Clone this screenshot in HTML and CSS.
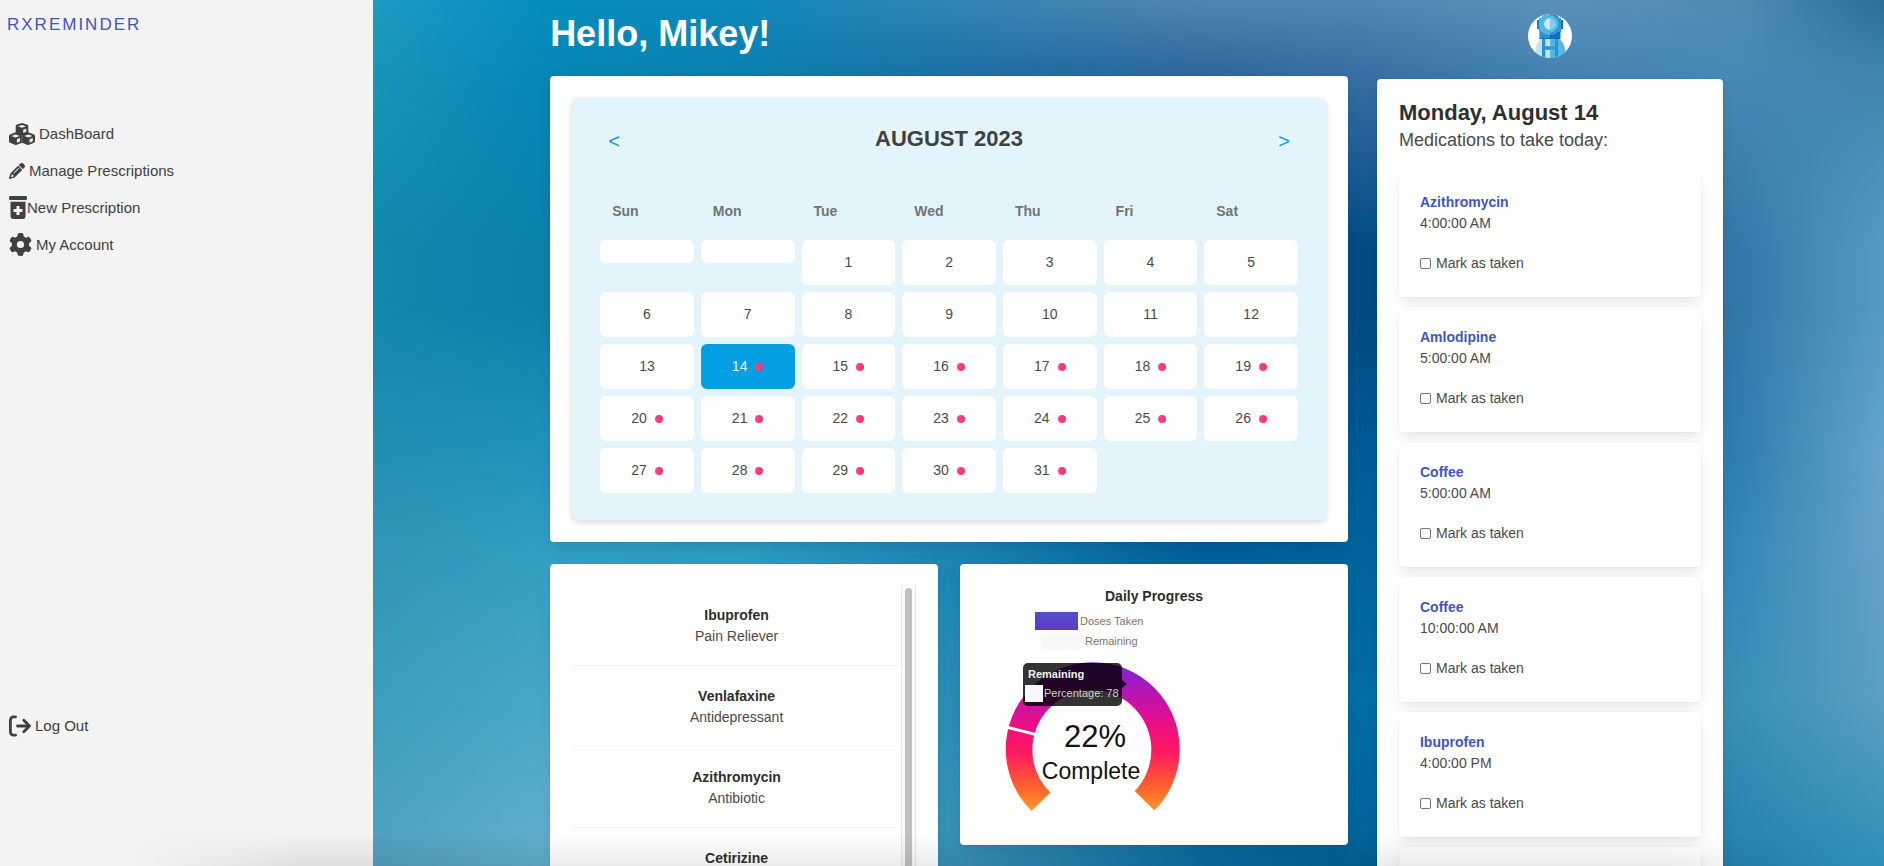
FILE: index.html
```html
<!DOCTYPE html>
<html lang="en">
<head>
<meta charset="utf-8">
<title>RxReminder</title>
<link rel="stylesheet" href="styles.css">
</head>
<body>
<aside class="sidebar">
  <a class="brand" href="#">RXREMINDER</a>
  <nav class="menu">
    <a class="menu-item" href="#">
      <svg width="26" height="22" viewBox="0 0 26 22" aria-hidden="true">
        <path fill="#404040" d="M13 0l5 1.600q1.300.500 1.300 1.900v5.700l5.300 2q1.400.600 1.400 2v4.700q0 1.300-1.200 1.900l-4.600 2q-1 .400-2 0L13 19.800l-5.200 2q-1 .400-2 0l-4.600-2Q0 19.200 0 17.900v-4.700q0-1.400 1.400-2l5.300-2V3.500q0-1.400 1.300-1.900z"/>
        <g fill="#f3f3f3"><path d="M9 3.300L13 2l4 1.300-4 1.500zM14.200 6.800l3-1.200v3.100l-3 1.200zM2.400 12.900l4.200-1.500 4.100 1.500-4.100 1.600zM7.900 16.300l3.100-1.200v3.400l-3.100 1.300zM15.300 12.900l4.100-1.500 4.200 1.500-4.200 1.600zM20.600 16.300l3.200-1.200v3.200l-3.200 1.500z"/><path d="M12.700 12.500h.600v6.500h-.600z" opacity=".5"/></g>
      </svg>
      <span class="menu-text">DashBoard</span>
    </a>
    <a class="menu-item" href="#">
      <svg width="16" height="16" viewBox="0 0 512 512" aria-hidden="true"><path fill="#404040" d="M410.3 231l11.300-11.300-33.900-33.900-62.100-62.100L291.700 89.800l-11.300 11.300-22.600 22.600L58.600 322.900c-10.400 10.400-18 23.300-22.200 37.400L1 480.700c-2.500 8.400-.2 17.500 6.100 23.700s15.300 8.500 23.700 6.100l120.300-35.400c14.100-4.200 27-11.800 37.400-22.200L387.700 253.700 410.300 231zM160 399.400l-9.100 22.700c-4 3.100-8.500 5.400-13.300 6.900L59.400 452l23-78.100c1.400-4.900 3.800-9.400 6.900-13.300l22.700-9.100v32c0 8.800 7.200 16 16 16h32zM362.700 18.700L348.300 33.200 325.700 55.800 314.300 67.100l33.900 33.900 62.100 62.100 33.900 33.900 11.300-11.300 22.600-22.600 14.500-14.500c25-25 25-65.500 0-90.500L453.300 18.700c-25-25-65.500-25-90.500 0zm-47.400 168l-144 144c-6.200 6.200-16.400 6.200-22.600 0s-6.200-16.400 0-22.600l144-144c6.200-6.200 16.400-6.200 22.600 0s6.200 16.400 0 22.600z"/></svg>
      <span class="menu-text">Manage Prescriptions</span>
    </a>
    <a class="menu-item" href="#">
      <svg width="18" height="23" viewBox="0 0 18 23" aria-hidden="true"><rect width="18" height="4" rx="1.200" fill="#404040"/><path fill="#404040" d="M1.500 5.700h15V20a3 3 0 0 1-3 3h-9a3 3 0 0 1-3-3z"/><path fill="#f3f3f3" d="M7.500 10h3v3h3v3h-3v3h-3v-3h-3v-3h3z"/></svg>
      <span class="menu-text flush">New Prescription</span>
    </a>
    <a class="menu-item" href="#">
      <svg width="23" height="23" viewBox="0 0 512 512" aria-hidden="true"><path fill="#404040" d="M495.900 166.600c3.200 8.700 .5 18.400-6.400 24.600l-43.300 39.400c1.100 8.300 1.700 16.800 1.700 25.400s-.6 17.100-1.700 25.400l43.300 39.400c6.900 6.200 9.600 15.900 6.400 24.600c-4.400 11.900-9.700 23.300-15.800 34.300l-4.700 8.100c-6.600 11-14 21.400-22.100 31.200c-5.900 7.200-15.700 9.600-24.500 6.800l-55.700-17.700c-13.400 10.300-28.200 18.900-44 25.400l-12.500 57.100c-2 9.100-9 16.300-18.200 17.800c-13.800 2.300-28 3.500-42.500 3.500s-28.700-1.200-42.500-3.500c-9.200-1.500-16.200-8.700-18.200-17.800l-12.500-57.100c-15.800-6.500-30.600-15.100-44-25.400L83.100 425.900c-8.800 2.800-18.600 .3-24.500-6.800c-8.100-9.800-15.500-20.200-22.100-31.200l-4.700-8.100c-6.100-11-11.400-22.400-15.800-34.300c-3.200-8.700-.5-18.400 6.400-24.600l43.300-39.400C64.600 273.100 64 264.600 64 256s.6-17.100 1.700-25.400L22.400 191.200c-6.900-6.200-9.600-15.900-6.400-24.600c4.400-11.900 9.700-23.300 15.800-34.300l4.700-8.100c6.600-11 14-21.400 22.100-31.200c5.900-7.200 15.700-9.600 24.500-6.800l55.700 17.700c13.400-10.300 28.200-18.900 44-25.400l12.500-57.100c2-9.100 9-16.300 18.200-17.800C227.300 1.200 241.500 0 256 0s28.700 1.200 42.500 3.500c9.200 1.500 16.200 8.700 18.200 17.800l12.500 57.100c15.800 6.500 30.600 15.100 44 25.400l55.700-17.700c8.800-2.800 18.600-.3 24.500 6.800c8.100 9.800 15.500 20.200 22.100 31.200l4.700 8.100c6.100 11 11.400 22.400 15.800 34.300zM256 336a80 80 0 1 0 0-160 80 80 0 1 0 0 160z"/></svg>
      <span class="menu-text">My Account</span>
    </a>
  </nav>
  <a class="menu-item logout" href="#">
    <svg width="22" height="22" viewBox="0 0 22 22" aria-hidden="true"><g fill="none" stroke="#404040" stroke-width="2.800" stroke-linecap="round" stroke-linejoin="round"><path d="M6.600 1.900H4.400a3 3 0 0 0-3 3v12.200a3 3 0 0 0 3 3h2.200"/><path d="M8.500 11h12M14.800 5.300l5.700 5.700-5.700 5.700"/></g></svg>
    <span class="menu-text">Log Out</span>
  </a>
</aside>

<main class="main">
  <div class="backdrop" aria-hidden="true">
    <div class="band band-1"></div><div class="band band-2"></div><div class="band band-3"></div><div class="band band-4"></div><div class="band band-5"></div><div class="band band-6"></div><div class="band band-7"></div>
  </div>

  <div class="primary">
    <h1 class="greeting">Hello, Mikey!</h1>
    <section class="panel">
      <div class="calendar">
        <div class="calendar-head">
          <button class="arrow" aria-label="Previous month">&lt;</button>
          <h2 class="heading">AUGUST 2023</h2>
          <button class="arrow" aria-label="Next month">&gt;</button>
        </div>
        <div class="grid weekdays">
          <span>Sun</span><span>Mon</span><span>Tue</span><span>Wed</span><span>Thu</span><span>Fri</span><span>Sat</span>
        </div>
        <div class="grid">
          <div class="blank"></div><div class="blank"></div>
          <button class="day">1</button><button class="day">2</button><button class="day">3</button><button class="day">4</button><button class="day">5</button>
          <button class="day">6</button><button class="day">7</button><button class="day">8</button><button class="day">9</button><button class="day">10</button><button class="day">11</button><button class="day">12</button>
          <button class="day">13</button><button class="day dose today">14</button><button class="day dose">15</button><button class="day dose">16</button><button class="day dose">17</button><button class="day dose">18</button><button class="day dose">19</button>
          <button class="day dose">20</button><button class="day dose">21</button><button class="day dose">22</button><button class="day dose">23</button><button class="day dose">24</button><button class="day dose">25</button><button class="day dose">26</button>
          <button class="day dose">27</button><button class="day dose">28</button><button class="day dose">29</button><button class="day dose">30</button><button class="day dose">31</button>
        </div>
      </div>
    </section>

    <div class="pair">
      <section class="panel list-panel">
        <ul class="drug-list">
          <li><strong>Ibuprofen</strong><span>Pain Reliever</span></li>
          <li><strong>Venlafaxine</strong><span>Antidepressant</span></li>
          <li><strong>Azithromycin</strong><span>Antibiotic</span></li>
          <li><strong>Cetirizine</strong></li>
        </ul>
        <div class="track"><div class="thumb"></div></div>
      </section>

      <section class="panel">
        <h3 class="chart-title">Daily Progress</h3>
        <svg class="chart" width="218" height="217" viewBox="0 0 218 217" role="img" aria-label="Daily progress, 22% complete">
          <defs>
            <linearGradient id="heat" gradientUnits="userSpaceOnUse" x1="0" y1="0" x2="0" y2="210">
              <stop offset="0" stop-color="#4c58c8"/>
              <stop offset=".12" stop-color="#6138c9"/>
              <stop offset=".3" stop-color="#8a1ed4"/>
              <stop offset=".48" stop-color="#d011a0"/>
              <stop offset=".58" stop-color="#ee0f80"/>
              <stop offset=".7" stop-color="#ff1a60"/>
              <stop offset=".88" stop-color="#ff6a28"/>
              <stop offset="1" stop-color="#ffa538"/>
            </linearGradient>
          </defs>
          <rect x="53" y="6" width="43" height="18" fill="url(#heat)"/>
          <text class="legend" x="98" y="19">Doses Taken</text>
          <rect x="59" y="27" width="42" height="17" fill="#f8f8f8"/>
          <text class="legend" x="103" y="39">Remaining</text>
          <path fill="url(#heat)" d="M49.500 205A87 87 0 1 1 172.500 204.500L152.700 185A59.500 59.500 0 1 0 68.500 186.500Z"/>
          <path stroke="#fff" stroke-width="3" d="M25 121.200L55 128.900"/>
          <path fill="#000" fill-opacity=".8" d="M46 57h89a5 5 0 0 1 5 5v12l5 4-5 4v13a5 5 0 0 1-5 5H46a5 5 0 0 1-5-5V62a5 5 0 0 1 5-5z"/>
          <text class="tip strong" x="46" y="72">Remaining</text>
          <rect x="43" y="79" width="18" height="17" fill="#f8f8f8"/>
          <text class="tip" x="62" y="91">Percentage: 78</text>
          <text class="percent" x="113" y="141">22%</text>
          <text class="caption" x="109" y="173">Complete</text>
        </svg>
      </section>
    </div>
  </div>

  <div class="secondary">
    <svg class="avatar" width="44" height="44" viewBox="0 0 44 44" role="img" aria-label="Profile">
      <defs><clipPath id="round"><circle cx="22" cy="22" r="22"/></clipPath></defs>
      <g clip-path="url(#round)">
        <path fill="#fff" d="M0 0h44v44H0z"/>
        <path fill="#c0e3f2" d="M14 24c-5 3-7 8-7 20h10V24z"/>
        <path fill="#58b7dc" d="M30 24c5 3 8 9 8 20H28V24z"/>
        <path fill="#2b93d5" d="M14 24h16v20H14z"/>
        <path fill="#58b7dc" d="M17 25h10v19H17z"/>
        <path fill="#c0e3f2" d="M17.500 25h4.500v7h-4.500zM17.500 36h4.500v8h-4.500z"/>
        <path fill="#2b93d5" d="M14 32.500h16v3H14z"/>
        <path fill="#1a7fca" d="M9 6h4v9H9z"/>
        <path fill="#0b6fc2" d="M31 6h4v9h-4z"/>
        <path fill="#0b6fc2" d="M11.500 17h21v8h-21z"/>
        <path fill="#2b93d5" d="M12 17h10v7H12z"/>
        <path fill="#45a9da" d="M11 4h8v14h-8z"/>
        <path fill="#2b93d5" d="M25 4h8v14h-8z"/>
        <circle cx="22" cy="10" r="11" fill="#58b7dc"/>
        <path fill="#2b93d5" d="M22-1a11 11 0 0 1 0 22z"/>
        <circle cx="22" cy="10" r="8.500" fill="#58b7dc"/>
        <circle cx="22" cy="10" r="5.800" fill="#8accea"/>
        <path fill="#c8e7f4" d="M22 4.200a5.800 5.800 0 0 0 0 11.600z"/>
      </g>
    </svg>
    <section class="panel">
      <h2 class="heading dark">Monday, August 14</h2>
      <p class="subtitle">Medications to take today:</p>
      <div class="doses">
        <article class="dose-card"><a class="drug" href="#">Azithromycin</a><time>4:00:00 AM</time><label><input type="checkbox">Mark as taken</label></article>
        <article class="dose-card"><a class="drug" href="#">Amlodipine</a><time>5:00:00 AM</time><label><input type="checkbox">Mark as taken</label></article>
        <article class="dose-card"><a class="drug" href="#">Coffee</a><time>5:00:00 AM</time><label><input type="checkbox">Mark as taken</label></article>
        <article class="dose-card"><a class="drug" href="#">Coffee</a><time>10:00:00 AM</time><label><input type="checkbox">Mark as taken</label></article>
        <article class="dose-card"><a class="drug" href="#">Ibuprofen</a><time>4:00:00 PM</time><label><input type="checkbox">Mark as taken</label></article>
        <article class="dose-card"></article>
      </div>
    </section>
  </div>
</main>
<div class="bottom-shade" aria-hidden="true"></div>
</body>
</html>
```
FILE: styles.css
```css
* { box-sizing: border-box; }

body {
  margin: 0;
  display: flex;
  height: 100vh;
  overflow: hidden;
  font-family: "Liberation Sans", Arial, sans-serif;
  font-size: 14px;
  line-height: 21px;
  color: #4a4a4a;
}

h1, h2, h3, p, ul { margin: 0; padding: 0; }
ul { list-style: none; }
a { color: inherit; text-decoration: none; }
button { border: 0; padding: 0; font: inherit; color: inherit; background: none; }

/* Sidebar */
.sidebar {
  flex: 0 0 19.8%;
  display: flex;
  flex-direction: column;
  padding: 14px 7px 0;
  background: #f3f3f3;
}
.brand {
  font-size: 17px;
  letter-spacing: 2px;
  color: #3f55bf;
}
.menu { margin-top: 80px; }
.menu-item {
  display: flex;
  align-items: center;
  height: 37px;
  padding-left: 2px;
  font-size: 15px;
  color: #404040;
}
.menu-text { margin-left: 4px; }
.menu-text.flush { margin-left: 0; }
.logout { margin-top: auto; margin-bottom: 122px; }

/* Main area */
.main {
  position: relative;
  flex: 1;
  display: flex;
  align-items: flex-start;
  gap: 29px;
  padding: 0 8.55% 0 9.4%;
}
.backdrop, .band { position: absolute; inset: 0; }
.band-1 { background: linear-gradient(90deg, #1f9bc4, #048ebd 11.7%, #0f8abb 25%, #3586b5 39.5%, #5186b0 54.7%, #5187b2 65.5%, #5c92b8 78%, #4f8cb2 90.5%, #2a6f98); }
.band-2 { background: linear-gradient(90deg, #1b94bb, #0787b6 11.7%, #0a80ae 25%, #1f6fa5 39.5%, #2f689d 54.7%, #3a70a4 65.5%, #4583b2 78%, #478ab6 90.5%, #4085ae); mask-image: linear-gradient(transparent 0, #000 8%); }
.band-3 { background: linear-gradient(90deg, #1488ae, #0a80aa 11.7%, #0670a2 39.5%, #014f89 54.7%, #014a84 65.5%, #20659a 78%, #3478aa 90.5%, #559bc6); mask-image: linear-gradient(transparent 8%, #000 29%); }
.band-4 { background: linear-gradient(90deg, #238fb3, #2194b9 11.7%, #1080b0 39.5%, #015a93 54.7%, #015a93 65.5%, #1f70a5 78%, #2f7eb0 90.5%, #65a5cc); mask-image: linear-gradient(transparent 35%, #000 52%); }
.band-5 { background: linear-gradient(90deg, #3197b7, #319fc2 11.7%, #2d9bc0 25%, #1b82b2 39.5%, #015f98 54.7%, #01649c 65.5%, #2078ac 78%, #3588b8 90.5%, #66a3c8); mask-image: linear-gradient(transparent 52%, #000 64%); }
.band-6 { background: linear-gradient(90deg, #3c9ebb, #48a8c6 11.7%, #3a9cc0 25%, #2a8cb5 39.5%, #0d70a5 54.7%, #036ca3 65.5%, #2080b0 78%, #3a90b8 90.5%, #5b9fc0); mask-image: linear-gradient(transparent 64%, #000 81%); }
.band-7 { background: linear-gradient(90deg, #52a2bf, #64b0cc 11.7%, #4c9cc0 25%, #3a90b8 39.5%, #0c6ea3 54.7%, #016396 65.5%, #1472a5 78%, #2782ae 90.5%, #2f8fb8); mask-image: linear-gradient(transparent 81%, #000 100%); }

.primary, .secondary { position: relative; min-width: 0; display: flex; flex-direction: column; }
.primary { flex: 798; }
.secondary { flex: 346; padding-top: 14px; }

.greeting {
  margin: 7px 0 15px;
  font-size: 36px;
  line-height: 54px;
  color: #fff;
}
.panel {
  padding: 22px;
  border-radius: 4px;
  background: #fff;
  box-shadow: 0 7px 14px -2px rgba(10, 10, 10, .1), 0 0 0 1px rgba(10, 10, 10, .02);
}
.heading { font-size: 22px; line-height: 28px; color: #404040; }
.heading.dark { line-height: 24px; color: #2e2e2e; }

/* Calendar */
.calendar {
  padding: 27px 28px;
  border-radius: 6px;
  background: #e3f4fc;
  box-shadow: 0 2px 6px rgba(0, 0, 0, .16);
}
.calendar-head {
  display: flex;
  justify-content: space-between;
  align-items: center;
  margin-bottom: 48px;
  padding: 0 8px;
}
.arrow { padding-top: 4px; font-size: 20px; line-height: 24px; color: #0c9fe0; }
.grid {
  display: grid;
  grid-template-columns: repeat(7, 1fr);
  gap: 7px;
  align-items: start;
}
.weekdays { margin-bottom: 18px; font-weight: bold; color: #737373; }
.weekdays span { padding-left: 12px; }
.day, .blank { border-radius: 6px; background: #fff; }
.blank { height: 23px; }
.day {
  display: flex;
  align-items: center;
  justify-content: center;
  gap: 8px;
  height: 45px;
}
.dose::after {
  content: "";
  width: 8px;
  height: 8px;
  border-radius: 50%;
  background: linear-gradient(90deg, #ff45a3, #ff3158);
}
.today { background: #039fe2; color: #e8f6fd; }

/* Lower panels */
.pair {
  display: grid;
  grid-template-columns: 1fr 1fr;
  align-items: start;
  gap: 22px;
  margin-top: 22px;
}
.list-panel { display: flex; height: 420px; padding-top: 21px; }
.drug-list { flex: 1; overflow: hidden; text-align: center; }
.drug-list li {
  display: flex;
  flex-direction: column;
  height: 81px;
  padding-top: 20px;
  border-bottom: 1px solid #f4f4f4;
}
.drug-list strong, .chart-title { color: #2e2e2e; }
.track {
  width: 15px;
  padding: 3px;
  border: 1px solid #e6e6e6;
  border-width: 0 1px;
  background: #fafafa;
}
.thumb { height: 360px; border-radius: 4px; background: #c1c1c1; }

.chart-title { font-size: 14px; line-height: 20px; text-align: center; }
.chart { display: block; }
.legend { font-size: 11px; fill: #757575; }
.tip { font-size: 11px; fill: #d0d0d0; }
.tip.strong { font-weight: bold; fill: #f2f2f2; }
.percent, .caption { fill: #111; text-anchor: middle; }
.percent { font-size: 31px; }
.caption { font-size: 23px; }

/* Today's medications */
.avatar { display: block; align-self: center; margin-bottom: 21px; }
.subtitle { padding-top: 2px; font-size: 18px; line-height: 27px; }
.doses { display: flex; flex-direction: column; gap: 10px; margin-top: 18px; }
.dose-card {
  display: flex;
  flex-direction: column;
  min-height: 125px;
  padding: 20px 21px 23px;
  border-radius: 4px;
  background: #fff;
  box-shadow: 0 7px 14px -2px rgba(10, 10, 10, .1), 0 0 0 1px rgba(10, 10, 10, .02);
}
.drug { font-weight: bold; color: #3f55bf; }
.dose-card label { display: flex; align-items: center; gap: 5px; margin-top: 19px; }
.dose-card input {
  appearance: none;
  width: 11px;
  height: 11px;
  margin: 0;
  border: 1px solid #767676;
  border-radius: 2px;
  background: #fff;
}

.bottom-shade {
  position: fixed;
  inset: auto 0 0;
  height: 32px;
  pointer-events: none;
  background: linear-gradient(transparent, rgba(0, 0, 0, .08));
  mask-image: linear-gradient(90deg, transparent 7%, #000 16%, #000 88%, transparent 97%);
}
```
